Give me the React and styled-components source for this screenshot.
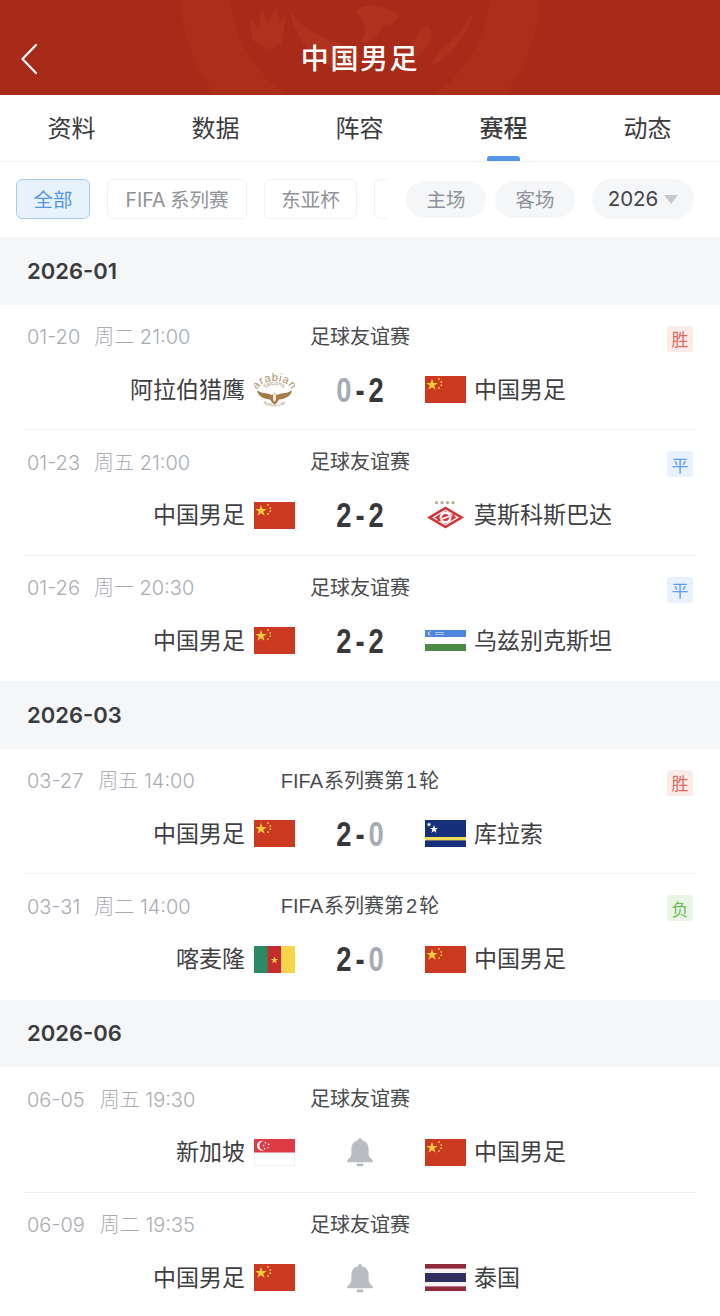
import React from 'react';
import styled, { createGlobalStyle } from 'styled-components';

const GlobalStyle = createGlobalStyle`
  html, body {
    margin: 0;
    padding: 0;
    background: #fff;
  }
  body {
    font-family: 'Inter', 'Noto Sans CJK SC', sans-serif;
  }
`;

const Page = styled.div`
  width: 720px;
  height: 1316px;
  overflow: hidden;
  background: #fff;
`;

const Header = styled.header`
  position: relative;
  height: 95px;
  background: #a72b18;
  overflow: hidden;
  display: flex;
  align-items: flex-end;
  justify-content: center;
`;

const HeaderArt = styled.svg`
  position: absolute;
  inset: 0;
`;

const BackIcon = styled.svg`
  position: absolute;
  left: 20px;
  top: 43px;
`;

const Title = styled.h1`
  position: relative;
  margin: 0 0 16px;
  font-size: 28px;
  line-height: 40px;
  font-weight: 500;
  letter-spacing: 1.6px;
  color: #fff;
`;

const Tabs = styled.nav`
  display: grid;
  grid-template-columns: repeat(5, 1fr);
  height: 66px;
  border-bottom: 1px solid #f0f1f3;
`;

const Tab = styled.div`
  position: relative;
  display: flex;
  justify-content: center;
  align-items: center;
  padding-bottom: 3px;
  padding-right: 1px;
  font-size: 24px;
  font-weight: ${p => (p.$active ? 500 : 400)};
  color: #3c3c3e;

  ${p => p.$active && `
    &::after {
      content: '';
      position: absolute;
      left: 55px;
      bottom: 0;
      width: 33px;
      height: 5px;
      border-radius: 3px 3px 0 0;
      background: #5596e6;
    }
  `}
`;

const FilterBar = styled.div`
  display: flex;
  align-items: center;
  height: 75px;
  padding-bottom: 1px;
  box-sizing: border-box;
`;

const ChipScroller = styled.div`
  display: flex;
  gap: 17px;
  width: 372px;
  margin-left: 16px;
  overflow: hidden;
  flex-shrink: 0;
`;

const Chip = styled.div`
  flex-shrink: 0;
  width: ${p => p.$width}px;
  height: 40px;
  box-sizing: border-box;
  padding-bottom: 2px;
  display: flex;
  align-items: center;
  justify-content: center;
  border-radius: 6px;
  font-size: 19.5px;
  word-spacing: -1px;
  white-space: nowrap;
  border: 1px solid ${p => (p.$active ? '#a5cdf1' : '#f0f1f3')};
  background: ${p => (p.$active ? '#e8f2fc' : '#fff')};
  color: ${p => (p.$active ? '#5596e6' : '#8f9298')};
`;

const PillGroup = styled.div`
  display: flex;
  align-items: center;
  gap: 9px;
  margin-left: 18px;
`;

const Pill = styled.div`
  display: flex;
  align-items: center;
  justify-content: center;
  gap: 6px;
  width: ${p => p.$width}px;
  height: ${p => (p.$select ? 40 : 37)}px;
  margin-left: ${p => (p.$select ? 8 : 0)}px;
  padding-bottom: 2px;
  box-sizing: border-box;
  border-radius: 20px;
  background: #f5f6f8;
  font-size: ${p => (p.$select ? 20.5 : 19.5)}px;
  color: ${p => (p.$select ? '#44464a' : '#8f9298')};
`;

const Caret = styled.span`
  width: 0;
  height: 0;
  margin-top: 2px;
  border-left: 7px solid transparent;
  border-right: 7px solid transparent;
  border-top: 9px solid #c6c8cd;
`;

const MonthBand = styled.div`
  height: 67.5px;
  box-sizing: border-box;
  padding-left: 27px;
  display: flex;
  align-items: center;
  background: #f5f6f8;
  font-size: 22px;
  font-weight: 600;
  color: #3a3b3e;
`;

const MatchRow = styled.div`
  height: 125.5px;
  margin: 0 24px;
  box-sizing: border-box;
  border-bottom: ${p => (p.$last ? 'none' : '1px solid #f0f1f3')};
`;

const MetaLine = styled.div`
  display: grid;
  grid-template-columns: 1fr auto 1fr;
  align-items: center;
  height: 26px;
  padding-top: 19px;
`;

const DateText = styled.div`
  display: flex;
  align-items: baseline;
  gap: ${p => p.$gap}px;
  padding-left: 3px;
  padding-bottom: 3px;
  font-size: 20px;
  line-height: 26px;
  font-weight: 300;
  color: #a9acb2;
  white-space: nowrap;
`;

const League = styled.div`
  padding-bottom: 4px;
  font-family: 'Liberation Sans', 'Noto Sans CJK SC', sans-serif;
  font-size: 20px;
  line-height: 26px;
  word-spacing: -3.5px;
  color: #4a4b4e;
  white-space: nowrap;
`;

const ResultBadge = styled.div`
  justify-self: end;
  margin-right: 3px;
  width: 26px;
  height: 26px;
  display: flex;
  align-items: center;
  justify-content: center;
  border-radius: 3px;
  font-size: 17px;
  background: ${p => ({ win: '#faeaea', draw: '#e8f2fc', loss: '#e9f6e4' }[p.$kind])};
  color: ${p => ({ win: '#dc6a60', draw: '#5e9fe8', loss: '#6cbb55' }[p.$kind])};
`;

const TeamLine = styled.div`
  display: grid;
  grid-template-columns: 1fr 130px 1fr;
  align-items: center;
  height: 40px;
  margin-top: 20px;
`;

const Side = styled.div`
  display: flex;
  align-items: center;
  justify-content: ${p => (p.$home ? 'flex-end' : 'flex-start')};
  gap: ${p => (p.$home ? 9 : 8)}px;
`;

const TeamName = styled.span`
  font-size: 23px;
  line-height: 30px;
  color: #3f4043;
  white-space: nowrap;
`;

const Score = styled.div`
  display: flex;
  justify-content: center;
  align-items: center;
  gap: 5px;
  font-family: 'Liberation Sans', sans-serif;
  font-size: 35px;
  line-height: 40px;
  font-weight: 700;
  color: #37383b;
  transform: scaleX(0.78);
`;

const ScoreDigit = styled.span`
  color: ${p => (p.$dim ? '#a6abb5' : '#37383b')};
`;

const BellWrap = styled.div`
  display: flex;
  justify-content: center;
`;

const FlagSvg = styled.svg`
  display: block;
  flex-shrink: 0;
`;

const CrestText = styled.text`
  font-family: 'Liberation Sans', sans-serif;
  fill: #ab9068;
`;

const ChinaFlag = () => (
  <FlagSvg width="41" height="27" viewBox="0 0 41 27">
    <rect width="41" height="27" fill="#cb3a20" />
    <polygon points="7,2.8 8.4,7 12.8,7 9.3,9.6 10.6,13.8 7,11.2 3.4,13.8 4.7,9.6 1.2,7 5.6,7" fill="#f7c83d" />
    <circle cx="14" cy="3" r="0.9" fill="#f7c83d" />
    <circle cx="16.3" cy="6" r="0.9" fill="#f7c83d" />
    <circle cx="16.3" cy="9.2" r="0.9" fill="#f7c83d" />
    <circle cx="14" cy="12" r="0.9" fill="#f7c83d" />
  </FlagSvg>
);

const UzbekFlag = () => (
  <FlagSvg width="41" height="27" viewBox="0 0 41 27">
    <rect width="41" height="27" fill="#fff" />
    <rect width="41" height="7" y="3" fill="#4f86dc" />
    <rect width="41" height="7" y="17" fill="#4d8a48" />
    <circle cx="5" cy="6.5" r="2" fill="#eaf2ff" />
    <circle cx="5.8" cy="6.5" r="1.7" fill="#4f86dc" />
    <rect x="10" y="5" width="9" height="1" fill="#a9c5f0" />
    <rect x="10" y="7" width="9" height="1" fill="#a9c5f0" />
  </FlagSvg>
);

const CuracaoFlag = () => (
  <FlagSvg width="41" height="27" viewBox="0 0 41 27">
    <rect width="41" height="27" fill="#16307c" />
    <rect width="41" height="3.4" y="17" fill="#f2dd5a" />
    <polygon points="9,5 10,8 13,8 10.6,9.8 11.5,12.8 9,11 6.5,12.8 7.4,9.8 5,8 8,8" fill="#fff" />
    <polygon points="4,2 4.6,3.8 6.4,3.8 5,4.9 5.5,6.6 4,5.6 2.5,6.6 3,4.9 1.6,3.8 3.4,3.8" fill="#fff" />
  </FlagSvg>
);

const CameroonFlag = () => (
  <FlagSvg width="41" height="27" viewBox="0 0 41 27">
    <rect width="14" height="27" fill="#2c8a62" />
    <rect x="13.6" width="13.8" height="27" fill="#c42c30" />
    <rect x="27.4" width="13.6" height="27" fill="#f6d548" />
    <polygon points="20.5,10.4 21.5,13 24.2,13 22,14.7 22.8,17.4 20.5,15.8 18.2,17.4 19,14.7 16.8,13 19.5,13" fill="#f2c63f" />
  </FlagSvg>
);

const SingaporeFlag = () => (
  <FlagSvg width="41" height="27" viewBox="0 0 41 27">
    <rect x="0.5" y="0.5" width="40" height="26" fill="#fff" stroke="#f0f0f0" />
    <rect width="41" height="13.5" fill="#de3a45" />
    <circle cx="8" cy="6.7" r="5" fill="#fff" />
    <circle cx="10" cy="6.7" r="4.6" fill="#de3a45" />
    <circle cx="11.5" cy="3.8" r="0.8" fill="#fff" />
    <circle cx="14.6" cy="5.2" r="0.8" fill="#fff" />
    <circle cx="14" cy="8.8" r="0.8" fill="#fff" />
    <circle cx="10.6" cy="9.6" r="0.8" fill="#fff" />
    <circle cx="9.6" cy="6.6" r="0.8" fill="#fff" />
  </FlagSvg>
);

const ThaiFlag = () => (
  <FlagSvg width="41" height="27" viewBox="0 0 41 27">
    <rect width="41" height="27" fill="#f6f1f2" />
    <rect width="41" height="4.6" fill="#90293c" />
    <rect width="41" height="9" y="9" fill="#2f2e5e" />
    <rect width="41" height="4.6" y="22.4" fill="#90293c" />
  </FlagSvg>
);

const FalconCrest = () => (
  <FlagSvg width="41" height="36" viewBox="0 0 41 36">
    <defs>
      <path id="crest-top" d="M3 20 A17.5 11 0 0 1 38 20" />
      <path id="crest-mid" d="M10 20 A10.5 7 0 0 1 31 20" />
      <path id="crest-bot" d="M6 26 A14.5 8.5 0 0 0 35 26" />
    </defs>
    <CrestText fontSize="11" letterSpacing="0.6">
      <textPath href="#crest-top" startOffset="50%" textAnchor="middle">arabian</textPath>
    </CrestText>
    <CrestText fontSize="6">
      <textPath href="#crest-mid" startOffset="50%" textAnchor="middle">falcons</textPath>
    </CrestText>
    <CrestText fontSize="4.4">
      <textPath href="#crest-bot" startOffset="50%" textAnchor="middle">football club</textPath>
    </CrestText>
    <path d="M3 18.5 C9 22 15 21 18 23 L20.5 20 L23 23 C26 21 32 22 38 18.5 C37 24 31 27 25 27.5 L23 30.5 L20.5 32.5 L18 30.5 L16 27.5 C10 27 4 24 3 18.5 Z" fill="#a27b45" />
    <path d="M19 22 L20.5 20 L22 22 L22 28 L20.5 30 L19 28 Z" fill="#efe6d8" />
  </FlagSvg>
);

const SpartakCrest = () => (
  <FlagSvg width="41" height="28" viewBox="0 0 41 28">
    <g fill="#b8ab94">
      <circle cx="11.5" cy="1.7" r="1.6" />
      <circle cx="17" cy="1.7" r="1.6" />
      <circle cx="22.5" cy="1.7" r="1.6" />
      <circle cx="28" cy="1.7" r="1.6" />
    </g>
    <polygon points="20.5,5.5 39,16.5 20.5,27.5 2,16.5" fill="#d5353a" />
    <polygon points="20.5,8.4 34,16.5 20.5,24.6 7,16.5" fill="#fff" />
    <polygon points="20.5,9.8 31.5,16.5 20.5,23.2 9.5,16.5" fill="#d5353a" />
    <circle cx="20.5" cy="16.5" r="6" fill="#fff" />
    <circle cx="20.5" cy="16.5" r="3.6" fill="#d5353a" />
    <path d="M12 18.5 L30 12.5 L31 14 L13 20.5 Z" fill="#d5353a" />
    <path d="M15 17.8 L27 13.6 L27.6 15 L15.6 19.2 Z" fill="#fff" />
  </FlagSvg>
);

const BellIcon = () => (
  <FlagSvg width="28" height="30" viewBox="0 0 28 30">
    <path
      d="M14 1 C15.4 1 16 2 16 3.2 C20.6 4.2 22.6 7.8 22.6 12 L22.6 17 C22.6 20 25 21.4 26.6 23.4 C27.3 24.4 26.8 25.2 25.6 25.2 L2.4 25.2 C1.2 25.2 0.7 24.4 1.4 23.4 C3 21.4 5.4 20 5.4 17 L5.4 12 C5.4 7.8 7.4 4.2 12 3.2 C12 2 12.6 1 14 1 Z"
      fill="#b9bcc2"
    />
    <rect x="10.5" y="26.6" width="7" height="2.6" rx="1.2" fill="#b9bcc2" />
  </FlagSvg>
);

const crests = {
  china: ChinaFlag,
  uzbek: UzbekFlag,
  curacao: CuracaoFlag,
  cameroon: CameroonFlag,
  singapore: SingaporeFlag,
  thai: ThaiFlag,
  falcon: FalconCrest,
  spartak: SpartakCrest,
};

const tabs = ['资料', '数据', '阵容', '赛程', '动态'];
const chips = [
  { label: '全部', width: 74 },
  { label: 'FIFA 系列赛', width: 140 },
  { label: '东亚杯', width: 93 },
  { label: '', width: 92 },
];

const months = [
  {
    label: '2026-01',
    matches: [
      { day: '01-20', week: '周二', time: '21:00', gap: 14, league: '足球友谊赛', result: ['win', '胜'], home: ['阿拉伯猎鹰', 'falcon'], away: ['中国男足', 'china'], score: ['0', '2'], dim: 0 },
      { day: '01-23', week: '周五', time: '21:00', gap: 14, league: '足球友谊赛', result: ['draw', '平'], home: ['中国男足', 'china'], away: ['莫斯科斯巴达', 'spartak'], score: ['2', '2'] },
      { day: '01-26', week: '周一', time: '20:30', gap: 14, league: '足球友谊赛', result: ['draw', '平'], home: ['中国男足', 'china'], away: ['乌兹别克斯坦', 'uzbek'], score: ['2', '2'] },
    ],
  },
  {
    label: '2026-03',
    matches: [
      { day: '03-27', week: '周五', time: '14:00', gap: 15, league: 'FIFA 系列赛第 1 轮', result: ['win', '胜'], home: ['中国男足', 'china'], away: ['库拉索', 'curacao'], score: ['2', '0'], dim: 1 },
      { day: '03-31', week: '周二', time: '14:00', gap: 14, league: 'FIFA 系列赛第 2 轮', result: ['loss', '负'], home: ['喀麦隆', 'cameroon'], away: ['中国男足', 'china'], score: ['2', '0'], dim: 1 },
    ],
  },
  {
    label: '2026-06',
    matches: [
      { day: '06-05', week: '周五', time: '19:30', gap: 15, league: '足球友谊赛', home: ['新加坡', 'singapore'], away: ['中国男足', 'china'] },
      { day: '06-09', week: '周二', time: '19:35', gap: 15, league: '足球友谊赛', home: ['中国男足', 'china'], away: ['泰国', 'thai'] },
    ],
  },
];

const Team = ({ team, home }) => {
  const Crest = crests[team[1]];
  return (
    <Side $home={home}>
      {home && <TeamName>{team[0]}</TeamName>}
      <Crest />
      {!home && <TeamName>{team[0]}</TeamName>}
    </Side>
  );
};

const Match = ({ match, last }) => (
  <MatchRow $last={last}>
    <MetaLine>
      <DateText $gap={match.gap}>
        <span>{match.day}</span>
        <span>{match.week} {match.time}</span>
      </DateText>
      <League>{match.league}</League>
      {match.result ? <ResultBadge $kind={match.result[0]}>{match.result[1]}</ResultBadge> : <span />}
    </MetaLine>
    <TeamLine>
      <Team team={match.home} home />
      {match.score ? (
        <Score>
          <ScoreDigit $dim={match.dim === 0}>{match.score[0]}</ScoreDigit>
          <span>-</span>
          <ScoreDigit $dim={match.dim === 1}>{match.score[1]}</ScoreDigit>
        </Score>
      ) : (
        <BellWrap><BellIcon /></BellWrap>
      )}
      <Team team={match.away} />
    </TeamLine>
  </MatchRow>
);

const App = () => {
  return (
    <Page>
      <GlobalStyle />
      <Header>
        <HeaderArt width="720" height="95" viewBox="0 0 720 95">
          <circle cx="360" cy="-12" r="155" fill="none" stroke="#ac2f1a" strokeWidth="50" />
          <g fill="#ae321d">
            <path d="M252 40 L250 18 L258 28 L262 8 L268 24 L276 6 L280 22 L286 14 L282 42 L270 50 Z" />
            <path d="M290 10 C300 30 330 42 358 48 C362 60 350 68 344 72 C315 64 295 40 290 10 Z" />
            <path d="M355 12 C366 0 388 6 400 16 L392 24 L382 26 C378 38 370 44 360 42 C368 34 366 22 355 12 Z" />
            <path d="M420 30 C428 22 436 30 430 42 C424 54 414 60 404 60 C412 52 414 40 420 30 Z" />
            <path d="M474 8 C470 32 452 58 430 66 L440 50 C456 38 468 24 474 8 Z" />
          </g>
        </HeaderArt>
        <BackIcon width="18" height="32" viewBox="0 0 18 32">
          <path d="M16 2 L2.5 16 L16 30" fill="none" stroke="#fff" strokeWidth="2.2" strokeLinecap="round" strokeLinejoin="round" />
        </BackIcon>
        <Title>中国男足</Title>
      </Header>
      <Tabs>
        {tabs.map(t => (
          <Tab key={t} $active={t === '赛程'}>{t}</Tab>
        ))}
      </Tabs>
      <FilterBar>
        <ChipScroller>
          {chips.map((c, i) => (
            <Chip key={i} $active={i === 0} $width={c.width}>{c.label}</Chip>
          ))}
        </ChipScroller>
        <PillGroup>
          <Pill $width={80}>主场</Pill>
          <Pill $width={80}>客场</Pill>
          <Pill $width={102} $select>2026<Caret /></Pill>
        </PillGroup>
      </FilterBar>
      {months.map(m => (
        <section key={m.label}>
          <MonthBand>{m.label}</MonthBand>
          {m.matches.map((match, i) => (
            <Match key={match.day} match={match} last={i === m.matches.length - 1} />
          ))}
        </section>
      ))}
    </Page>
  );
};

export default App;
